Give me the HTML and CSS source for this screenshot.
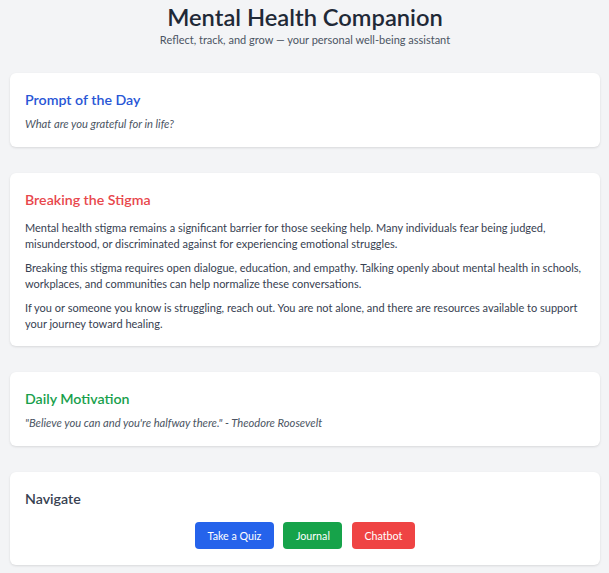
FILE: index.html
```html
<!DOCTYPE html>
<html lang="en">
<head>
<meta charset="utf-8">
<title>Mental Health Companion</title>
<link rel="stylesheet" href="styles.css">
</head>
<body>
<header class="header">
  <h1 class="title">Mental Health Companion</h1>
  <p class="subtitle">Reflect, track, and grow — your personal well-being assistant</p>
</header>
<main class="cards">
  <section class="card">
    <h2 class="card-title blue">Prompt of the Day</h2>
    <p class="quote">What are you grateful for in life?</p>
  </section>
  <section class="card card-long">
    <h2 class="card-title red">Breaking the Stigma</h2>
    <div class="body">
      <p>Mental health stigma remains a significant barrier for those seeking help. Many individuals fear being judged, misunderstood, or discriminated against for experiencing emotional struggles.</p>
      <p>Breaking this stigma requires open dialogue, education, and empathy. Talking openly about mental health in schools, workplaces, and communities can help normalize these conversations.</p>
      <p>If you or someone you know is struggling, reach out. You are not alone, and there are resources available to support your journey toward healing.</p>
    </div>
  </section>
  <section class="card">
    <h2 class="card-title green">Daily Motivation</h2>
    <p class="quote">"Believe you can and you're halfway there." - Theodore Roosevelt</p>
  </section>
  <section class="card card-nav">
    <h2 class="card-title dark">Navigate</h2>
    <nav class="nav">
      <a class="btn btn-blue" href="#">Take a Quiz</a>
      <a class="btn btn-green" href="#">Journal</a>
      <a class="btn btn-red" href="#">Chatbot</a>
    </nav>
  </section>
</main>
</body>
</html>
```
FILE: styles.css
```css
* { box-sizing: border-box; }
html, body { margin: 0; padding: 0; }
body {
  background: #f3f4f6;
  font-family: "Lato", "Open Sans", sans-serif;
  color: #374151;
  padding: 0 9px 20px 10px;
}
.header {
  text-align: center;
  padding-top: 3px;
  height: 73px;
}
.title {
  margin: 0;
  font-size: 23.7px;
  line-height: 28px;
  font-weight: 600;
  color: #1f2937;
}
.subtitle {
  margin: 1px 0 0;
  font-size: 11px;
  line-height: 16px;
  color: #4b5563;
}
.cards {
  display: flex;
  flex-direction: column;
  gap: 26px;
}
.card {
  background: #fff;
  border-radius: 6px;
  box-shadow: 0 1px 3px rgba(0,0,0,0.08), 0 1px 2px rgba(0,0,0,0.04);
  padding: 16px 15px 15px;
}
.card-long { padding-bottom: 14px; }
.card-nav { padding-bottom: 16px; }
.card-title {
  margin: 0 0 5px;
  font-size: 14.2px;
  line-height: 22px;
  font-weight: 600;
}
.blue { color: #2856d6; }
.red { color: #e8474c; }
.green { color: #18a04c; }
.dark { color: #374151; }
.quote {
  margin: 0;
  font-size: 11.2px;
  line-height: 16px;
  font-style: italic;
  color: #4b5563;
}
.body { display: flex; flex-direction: column; gap: 8px; padding-top: 4px; }
.body p {
  margin: 0;
  font-size: 11px;
  line-height: 16px;
  color: #374151;
}
.nav {
  display: flex;
  justify-content: center;
  gap: 9.5px;
  margin-top: 12px;
}
.btn {
  display: inline-flex;
  align-items: center;
  height: 27px;
  padding: 0 12.5px;
  border-radius: 4px;
  color: #fff;
  font-size: 10.7px;
  text-decoration: none;
}
.btn-blue { background: #2563eb; }
.btn-green { background: #16a34a; }
.btn-red { background: #ef4444; }
```
